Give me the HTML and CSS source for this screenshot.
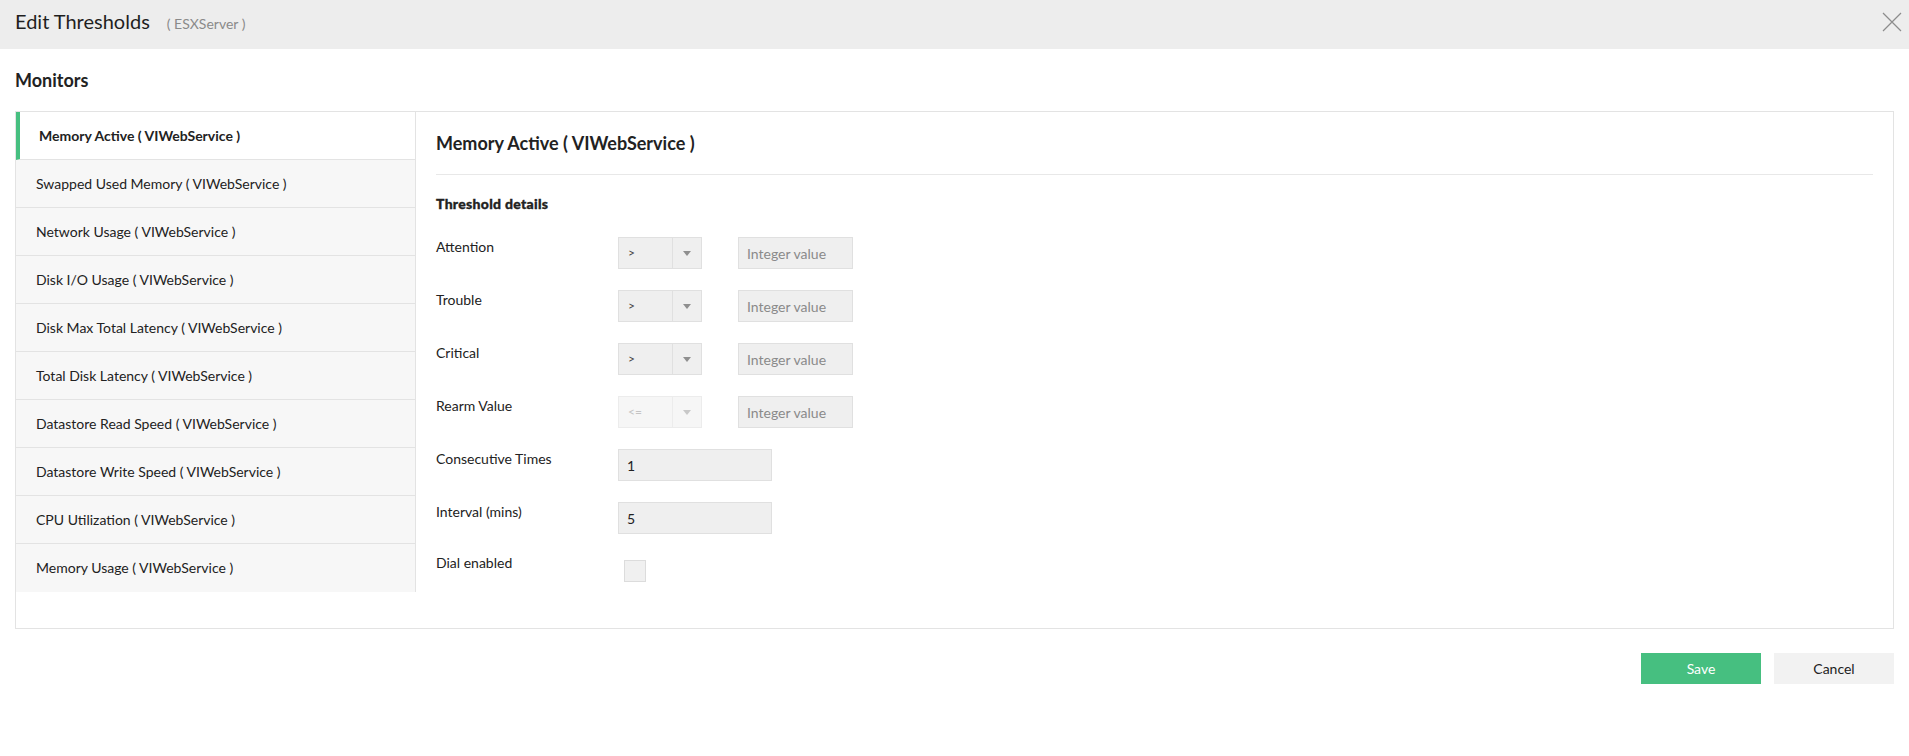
FILE: index.html
```html
<!DOCTYPE html>
<html lang="en">
<head>
  <meta charset="UTF-8">
  <meta name="viewport" content="width=device-width, initial-scale=1.0">
  <title>Edit Thresholds</title>
  <link rel="stylesheet" href="styles.css">
</head>
<body>
  <div class="dialog">
    <div class="dialog-header">
      <span class="dialog-title">Edit Thresholds</span>
      <span class="dialog-sub">( ESXServer )</span>
      <button class="close-btn" title="Close">
        <svg width="20" height="20" viewBox="0 0 20 20"><path d="M1 1 L19 19 M19 1 L1 19" stroke="#8c8c8c" stroke-width="1.2" fill="none"/></svg>
      </button>
    </div>

    <div class="dialog-body">
      <h2 class="section-title">Monitors</h2>

      <div class="monitor-box">
        <ul class="monitor-list">
          <li class="active">Memory Active ( VIWebService )</li>
          <li>Swapped Used Memory ( VIWebService )</li>
          <li>Network Usage ( VIWebService )</li>
          <li>Disk I/O Usage ( VIWebService )</li>
          <li>Disk Max Total Latency ( VIWebService )</li>
          <li>Total Disk Latency ( VIWebService )</li>
          <li>Datastore Read Speed ( VIWebService )</li>
          <li>Datastore Write Speed ( VIWebService )</li>
          <li>CPU Utilization ( VIWebService )</li>
          <li>Memory Usage ( VIWebService )</li>
        </ul>

        <div class="monitor-detail">
          <h3 class="detail-title">Memory Active ( VIWebService )</h3>
          <h4 class="detail-sub">Threshold details</h4>

          <div class="form">
            <div class="form-row">
              <label>Attention</label>
              <div class="select"><span class="select-val">&gt;</span><span class="select-arrow"></span></div>
              <input class="field" type="text" placeholder="Integer value">
            </div>
            <div class="form-row">
              <label>Trouble</label>
              <div class="select"><span class="select-val">&gt;</span><span class="select-arrow"></span></div>
              <input class="field" type="text" placeholder="Integer value">
            </div>
            <div class="form-row">
              <label>Critical</label>
              <div class="select"><span class="select-val">&gt;</span><span class="select-arrow"></span></div>
              <input class="field" type="text" placeholder="Integer value">
            </div>
            <div class="form-row">
              <label>Rearm Value</label>
              <div class="select disabled"><span class="select-val">&lt;=</span><span class="select-arrow"></span></div>
              <input class="field" type="text" placeholder="Integer value">
            </div>
            <div class="form-row">
              <label>Consecutive Times</label>
              <input class="field wide" type="text" value="1">
            </div>
            <div class="form-row">
              <label>Interval (mins)</label>
              <input class="field wide" type="text" value="5">
            </div>
            <div class="form-row dial">
              <label>Dial enabled</label>
              <span class="checkbox"></span>
            </div>
          </div>
        </div>
      </div>

      <div class="actions">
        <button class="btn btn-save">Save</button>
        <button class="btn btn-cancel">Cancel</button>
      </div>
    </div>
  </div>
</body>
</html>
```

FILE: styles.css
```css
body {
  margin: 0;
  font-family: Lato, "Open Sans", Arial, sans-serif;
  color: #222;
  background: #fff;
}
.dialog-header {
  display: flex;
  align-items: baseline;
  height: 49px;
  box-sizing: border-box;
  padding: 9px 7px 0 15px;
  background: #ededed;
}
.dialog-title {
  font-size: 20px;
  line-height: 24px;
  color: #1f1f1f;
}
.dialog-sub {
  margin-left: 17px;
  font-size: 14px;
  color: #8a8a8a;
}
.close-btn {
  margin-left: auto;
  align-self: flex-start;
  margin-top: 3px;
  padding: 0;
  border: none;
  background: none;
  cursor: pointer;
  line-height: 0;
}
.dialog-body {
  padding: 20px 15px 0;
}
.section-title {
  margin: 0 0 20px;
  font-size: 18px;
  line-height: 22px;
  font-weight: 700;
}
.monitor-box {
  display: flex;
  border: 1px solid #e3e3e3;
}
.monitor-list {
  list-style: none;
  margin: 0;
  padding: 0;
  width: 399px;
  align-self: flex-start;
  border-right: 1px solid #e3e3e3;
}
.monitor-list li {
  height: 47px;
  line-height: 47px;
  padding-left: 20px;
  font-size: 14px;
  color: #222;
  background: #f7f7f7;
  border-bottom: 1px solid #e3e3e3;
}
.monitor-list li:last-child {
  border-bottom: none;
  height: 48px;
}
.monitor-list li.active {
  background: #fff;
  font-weight: 700;
  padding-left: 19px;
  border-left: 4px solid #46bf80;
}
.monitor-detail {
  flex: 1;
  padding: 19px 20px 46px;
}
.detail-title {
  margin: 0;
  padding-bottom: 19px;
  font-size: 18px;
  line-height: 24px;
  font-weight: 700;
  border-bottom: 1px solid #e8e8e8;
}
.detail-sub {
  margin: 19px 0 23px;
  font-size: 14px;
  line-height: 20px;
  font-weight: 900;
  letter-spacing: 0.3px;
  -webkit-text-stroke: 0.35px #222;
}
.form-row {
  display: flex;
  align-items: flex-start;
  margin-bottom: 21px;
}
.form-row label {
  width: 182px;
  font-size: 14px;
  line-height: 20px;
}
.select {
  display: flex;
  width: 84px;
  height: 32px;
  box-sizing: border-box;
  border: 1px solid #e0e0e0;
  background: #efefef;
  margin-right: 36px;
}
.select-val {
  width: 44px;
  padding-left: 9px;
  line-height: 30px;
  font-size: 12px;
  color: #444;
}
.select-arrow {
  flex: 1;
  position: relative;
  border-left: 1px solid #e0e0e0;
}
.select-arrow::after {
  content: "";
  position: absolute;
  left: 50%;
  top: 13px;
  margin-left: -4px;
  border-left: 4px solid transparent;
  border-right: 4px solid transparent;
  border-top: 5px solid #8f8f8f;
}
.select.disabled {
  background: #f6f6f6;
  border-color: #ececec;
}
.select.disabled .select-val {
  color: #c4c4c4;
}
.select.disabled .select-arrow {
  border-left-color: #ececec;
}
.select.disabled .select-arrow::after {
  border-top-color: #c8c8c8;
}
.field {
  width: 115px;
  height: 32px;
  box-sizing: border-box;
  padding: 0 8px;
  border: 1px solid #e0e0e0;
  background: #efefef;
  font-family: inherit;
  font-size: 14px;
  color: #222;
  outline: none;
}
.field::placeholder {
  color: #8a8a8a;
}
.field.wide {
  width: 154px;
}
.form-row.dial {
  margin-top: -2px;
  margin-bottom: 0;
}
.checkbox {
  display: block;
  width: 22px;
  height: 22px;
  box-sizing: border-box;
  margin: 7px 0 0 6px;
  border: 1px solid #dcdcdc;
  background: #f0f0f0;
}
.actions {
  display: flex;
  justify-content: flex-end;
  gap: 13px;
  margin-top: 24px;
}
.btn {
  width: 120px;
  height: 31px;
  border: none;
  font-family: inherit;
  font-size: 14px;
  cursor: pointer;
}
.btn-save {
  background: #46bf80;
  color: #fff;
}
.btn-cancel {
  background: #f2f2f2;
  color: #222;
}
```
